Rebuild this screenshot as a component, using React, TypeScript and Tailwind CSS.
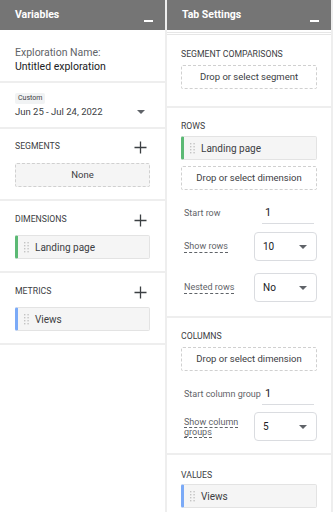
import type { ReactNode } from "react";

const font = { fontFamily: "Roboto, 'Noto Sans', Arial, sans-serif" };

function Header({ title }: { title: string }) {
  return (
    <div className="flex h-[30px] items-center justify-between bg-[#757575] pl-[15px] pr-[12px]">
      <span className="text-[10.5px] font-bold text-white">{title}</span>
      <span className="mt-[11px] h-[2px] w-[9px] bg-white" />
    </div>
  );
}

function Divider() {
  return <div className="h-[2px] bg-[#eeeeee]" />;
}

function Plus() {
  return (
    <svg width="13" height="13" viewBox="0 0 13 13" className="text-[#3c4043]">
      <path d="M6.5 0.5v12M0.5 6.5h12" stroke="currentColor" strokeWidth="1.3" />
    </svg>
  );
}

function Caret() {
  return (
    <svg width="8" height="4" viewBox="0 0 8 4">
      <path d="M0 0h8L4 4z" fill="#5f6368" />
    </svg>
  );
}

function Handle() {
  return (
    <svg width="5" height="11" viewBox="0 0 5 11" className="shrink-0">
      {[0, 1, 2, 3].map((r) => (
        <g key={r}>
          <rect x="0" y={r * 3} width="1.4" height="1.4" fill="#c4c4c4" />
          <rect x="3.4" y={r * 3} width="1.4" height="1.4" fill="#c4c4c4" />
        </g>
      ))}
    </svg>
  );
}

function SectionLabel({ children, plus }: { children: ReactNode; plus?: boolean }) {
  return (
    <div className="flex h-[14px] items-center justify-between">
      <span className="text-[8.7px] text-[#3c4043]">{children}</span>
      {plus ? (
        <span className="mr-[3px]">
          <Plus />
        </span>
      ) : null}
    </div>
  );
}

function Chip({ label, color }: { label: string; color: string }) {
  return (
    <div
      className="flex h-[24px] items-center gap-[6px] rounded-[2px] border border-[#e3e3e3] border-l-[3px] bg-[#f5f5f5] pl-[6px] text-[10px] text-[#3c4043]"
      style={{ borderLeftColor: color }}
    >
      <Handle />
      <span>{label}</span>
    </div>
  );
}

function DropBox({ label, filled }: { label: string; filled?: boolean }) {
  return (
    <div
      className={`flex h-[24px] items-center justify-center rounded-[2px] border border-dashed border-[#d0d0d0] text-[9.5px] text-[#3c4043] ${
        filled ? "bg-[#f5f5f5]" : "bg-white"
      }`}
    >
      {label}
    </div>
  );
}

function SelectBox({ value }: { value: string }) {
  return (
    <div className="flex h-[29px] w-[63px] shrink-0 items-center justify-between rounded-[4px] border border-[#dadce0] pl-[8px] pr-[9px] text-[10px] text-[#202124]">
      <span>{value}</span>
      <Caret />
    </div>
  );
}

function Dotted({ children }: { children: ReactNode }) {
  return <span className="border-b border-dashed border-[#5f6368] leading-[12px]">{children}</span>;
}

function NumberField({ label }: { label: string }) {
  return (
    <div className="flex items-center pl-[3px] text-[9px] text-[#5f6368]">
      <span className="w-[78px] whitespace-nowrap">{label}</span>
      <div className="h-[21px] w-[52px] border-b border-[#dadce0] pl-[3px] text-[11px] leading-[20px] text-[#202124]">
        1
      </div>
    </div>
  );
}

export default function App() {
  return (
    <div className="flex h-[512px] w-[333px] bg-white" style={font}>
      {/* variables */}
      <div className="flex w-[165px] shrink-0 flex-col">
        <Header title="Variables" />
        <div className="px-[15px] pb-[7px] pt-[16px] text-[10.5px] leading-[14px]">
          <div className="text-[#5f6368]">Exploration Name:</div>
          <div className="text-[#202124]">Untitled exploration</div>
        </div>
        <Divider />
        <div className="px-[15px] pb-[8px] pt-[10px]">
          <div className="h-[11px] w-fit rounded-[2px] bg-[#f1f3f4] px-[3px] text-[7px] leading-[11px] text-[#3c4043]">
            Custom
          </div>
          <div className="mt-[1px] flex h-[14px] items-center justify-between pr-[5px] text-[9.5px] text-[#3c4043]">
            <span>Jun 25 - Jul 24, 2022</span>
            <Caret />
          </div>
        </div>
        <Divider />
        <div className="px-[15px] pb-[12px] pt-[11px]">
          <SectionLabel plus>SEGMENTS</SectionLabel>
          <div className="mt-[9px]">
            <DropBox label="None" filled />
          </div>
        </div>
        <Divider />
        <div className="px-[15px] pb-[12px] pt-[12px]">
          <SectionLabel plus>DIMENSIONS</SectionLabel>
          <div className="mt-[8px]">
            <Chip label="Landing page" color="#5bb974" />
          </div>
        </div>
        <Divider />
        <div className="px-[15px] pb-[12px] pt-[12px]">
          <SectionLabel plus>METRICS</SectionLabel>
          <div className="mt-[8px]">
            <Chip label="Views" color="#7baaf7" />
          </div>
        </div>
        <Divider />
      </div>

      <div className="w-[2px] shrink-0 bg-[#eeeeee]" />

      {/* tab settings */}
      <div className="flex w-[164px] shrink-0 flex-col">
        <Header title="Tab Settings" />
        <div className="mt-[2px] h-[3px] border-y border-[#e6e6e6]" />
        <div className="px-[14px] pb-[17px] pt-[13px]">
          <SectionLabel>SEGMENT COMPARISONS</SectionLabel>
          <div className="mt-[3px]">
            <DropBox label="Drop or select segment" />
          </div>
        </div>
        <Divider />
        <div className="px-[14px] pb-[14px] pt-[12px]">
          <SectionLabel>ROWS</SectionLabel>
          <div className="mt-[2px]">
            <Chip label="Landing page" color="#5bb974" />
          </div>
          <div className="mt-[6px]">
            <DropBox label="Drop or select dimension" />
          </div>
          <div className="mt-[13px]">
            <NumberField label="Start row" />
          </div>
          <div className="mt-[8px] flex items-center justify-between pl-[3px] text-[9px] text-[#5f6368]">
            <Dotted>Show rows</Dotted>
            <SelectBox value="10" />
          </div>
          <div className="mt-[12px] flex items-center justify-between pl-[3px] text-[9px] text-[#5f6368]">
            <Dotted>Nested rows</Dotted>
            <SelectBox value="No" />
          </div>
        </div>
        <Divider />
        <div className="px-[14px] pb-[12px] pt-[12px]">
          <SectionLabel>COLUMNS</SectionLabel>
          <div className="mt-[3px]">
            <DropBox label="Drop or select dimension" />
          </div>
          <div className="mt-[13px]">
            <NumberField label="Start column group" />
          </div>
          <div className="mt-[7px] flex items-center justify-between pl-[3px] text-[9px] text-[#5f6368]">
            <span className="w-[60px] leading-[10px]">
              <span className="border-b border-dashed border-[#5f6368]">Show column groups</span>
            </span>
            <SelectBox value="5" />
          </div>
        </div>
        <Divider />
        <div className="px-[14px] pt-[14px]">
          <SectionLabel>VALUES</SectionLabel>
          <div className="mt-[1px]">
            <Chip label="Views" color="#7baaf7" />
          </div>
        </div>
      </div>
      <div className="w-[2px] shrink-0 bg-[#eeeeee]" />
    </div>
  );
}
